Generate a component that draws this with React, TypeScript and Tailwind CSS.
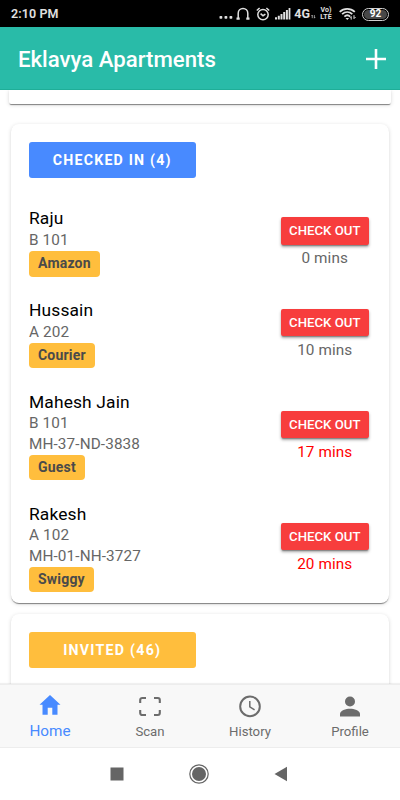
import type { ReactNode } from "react";

interface Visitor {
  name: string;
  unit: string;
  vehicle?: string;
  tag: string;
  minutes: number;
}

const OVERSTAY_MINUTES = 15;

const VISITORS: Visitor[] = [
  { name: "Raju", unit: "B 101", tag: "Amazon", minutes: 0 },
  { name: "Hussain", unit: "A 202", tag: "Courier", minutes: 10 },
  { name: "Mahesh Jain", unit: "B 101", vehicle: "MH-37-ND-3838", tag: "Guest", minutes: 17 },
  { name: "Rakesh", unit: "A 102", vehicle: "MH-01-NH-3727", tag: "Swiggy", minutes: 20 },
];

function StatusBar() {
  return (
    <div className="flex h-[27px] shrink-0 items-center justify-between bg-black pl-[11px] pr-[11px] pt-[1px] text-[#e0e0e0]">
      <span className="pt-[1px] text-[12.5px] font-semibold leading-none tracking-[0.1px]">2:10 PM</span>
      <div className="flex items-center">
        <svg width="14" height="14" viewBox="0 0 14 14" fill="currentColor">
          <rect x="0.5" y="9" width="2.8" height="2.8" rx="0.8" />
          <rect x="5.5" y="9" width="2.8" height="2.8" rx="0.8" />
          <rect x="10.5" y="9" width="2.8" height="2.8" rx="0.8" />
        </svg>
        <svg className="ml-[3px]" width="14" height="14" viewBox="0 0 14 14" fill="none" stroke="currentColor" strokeWidth="1.5">
          <path d="M2.2 12V6.2a4.8 4.8 0 0 1 9.6 0V12" />
          <path d="M0.5 11.6h3.2M10.3 11.6h3.2" strokeWidth="2.4" />
        </svg>
        <svg className="ml-[6px]" width="14" height="14" viewBox="0 0 14 14" fill="none" stroke="currentColor" strokeWidth="1.5">
          <circle cx="7" cy="7.6" r="5.2" />
          <path d="M0.8 3.5 3.6 1M13.2 3.5 10.4 1M4.6 6.6 7 8.7l2.4-1.6" />
        </svg>
        <svg className="ml-[5px]" width="16" height="14" viewBox="0 0 16 14" fill="currentColor">
          <path d="M0 10.2h2v2.3H0zM2.8 8.7h2v3.8h-2zM5.5 7h2v5.5h-2zM8.2 5h2v7.5h-2zM10.9 3h2v9.5h-2zM13.6 1h1.8v11.5h-1.8z" />
        </svg>
        <span className="ml-[3px] pt-[1px] text-[12.5px] font-bold leading-none">4G</span>
        <svg className="ml-[1px]" width="5" height="14" viewBox="0 0 6 14" fill="none" stroke="currentColor" strokeWidth="0.8">
          <path d="M1.5 12V8.3L0.6 9.4M4 8.3V12l1-1.2" />
        </svg>
        <span className="ml-[3px] flex w-[14px] flex-col items-center text-[7px] font-bold leading-[7px]">
          <span>Vo)</span>
          <span>LTE</span>
        </span>
        <svg className="ml-[6px]" width="18" height="14" viewBox="0 0 18 14" fill="none" stroke="currentColor" strokeWidth="1.8">
          <path d="M0.7 4.8C5 0.8 11.4 0.8 15.8 4.8M3.1 7.2c3-2.7 7.2-2.7 10.2 0M5.4 9.6c1.8-1.6 4-1.6 5.8 0" />
          <path d="M6.5 11h3.6l-1.8 2z" fill="currentColor" stroke="none" />
          <path d="M12.2 12.6v-3l-1 1.1M15 8.2v3.4l1.6-1.6" strokeWidth="1" />
        </svg>
        <span className="ml-[5px] flex h-[13px] w-[27px] items-center justify-center rounded-full border border-[#d0d0d0] p-[1px]">
          <span className="flex h-full w-full items-center justify-center rounded-full bg-[#484848] text-[10px] font-bold leading-none text-white">
            92
          </span>
        </span>
      </div>
    </div>
  );
}

function Card({ className, children }: { className: string; children?: ReactNode }) {
  return (
    <section className={`shrink-0 bg-white shadow-[0_2px_1px_-1px_rgba(0,0,0,0.35),0_1px_1px_rgba(0,0,0,0.14),0_1px_4px_rgba(0,0,0,0.14)] ${className}`}>
      {children}
    </section>
  );
}

function VisitorRow({ visitor }: { visitor: Visitor }) {
  const late = visitor.minutes > OVERSTAY_MINUTES;

  return (
    <li className={`flex justify-between pr-5 ${visitor.vehicle ? "h-[112px]" : "h-[91.7px]"}`}>
      <div className="flex flex-col items-start text-[15.3px] leading-[20.5px] text-[#666]">
        <h3 className="text-[17.4px] leading-[22.5px] tracking-[0.14px] text-black">{visitor.name}</h3>
        <p className="tracking-[0.12px]">{visitor.unit}</p>
        {visitor.vehicle && <p className="tracking-[0.12px]">{visitor.vehicle}</p>}
        <span className="mt-[0.7px] h-[25.5px] rounded-[4px] bg-[#ffbe3d] px-[9px] text-[14px] font-bold leading-[25px] tracking-[0.2px] text-[#4a4a4a]">
          {visitor.tag}
        </span>
      </div>
      <div className={`flex w-[88.5px] flex-col items-center ${visitor.vehicle ? "pt-[20px]" : "pt-[9.7px]"}`}>
        <button
          type="button"
          className="h-[27.5px] w-full shrink-0 rounded-[2px] bg-[#f73d3d] text-[13.2px] font-medium leading-[27.5px] text-white shadow-[0_2px_1px_-1px_rgba(0,0,0,0.25),0_2px_3px_rgba(0,0,0,0.35)]"
        >
          CHECK OUT
        </button>
        <p className={`mt-[3.5px] text-[15.3px] leading-[21px] tracking-[0.1px] ${late ? "text-[#ff0000]" : "text-[#666]"}`}>
          {visitor.minutes} mins
        </p>
      </div>
    </li>
  );
}

function Tab({ label, active, children }: { label: string; active?: boolean; children: ReactNode }) {
  return (
    <button type="button" className={`flex flex-1 flex-col items-center pt-2 ${active ? "text-[#488aff]" : "text-[#6c6c6c]"}`}>
      <svg width="26" height="26" viewBox="0 0 26 26" fill="currentColor">
        {children}
      </svg>
      <span className={`leading-5 ${active ? "mt-[2px] text-[15.3px]" : "mt-[3px] text-[13.2px]"}`}>{label}</span>
    </button>
  );
}

export default function App() {
  return (
    <div className="flex h-[800px] w-[400px] flex-col overflow-hidden bg-white font-[Roboto,sans-serif]">
      <StatusBar />
      <header className="flex h-[63px] shrink-0 items-center justify-between border-b border-[#1fae98] bg-[#29bba8] pl-[18px] pr-[14px] text-white">
        <h1 className="pt-[2px] text-[22.2px] font-medium leading-none">Eklavya Apartments</h1>
        <svg className="mt-[2px]" width="20" height="20" viewBox="0 0 20 20" fill="none" stroke="currentColor" strokeWidth="2.6">
          <path d="M10 0v20M0 10h20" />
        </svg>
      </header>

      <main className="flex min-h-0 flex-1 flex-col overflow-hidden">
        <Card className="mx-[9px] h-[14px] rounded-b-[2px]" />
        <Card className="mx-[11px] mt-5 h-[479px] rounded-[8px] pl-[18px] pt-[18px]">
          <h2 className="h-9 w-[166.5px] rounded-[3px] bg-[#488aff] text-center text-[14.2px] font-bold leading-9 tracking-[1.2px] text-white">
            CHECKED IN (4)
          </h2>
          <ul className="mt-[29.4px]">
            {VISITORS.map((visitor) => (
              <VisitorRow key={visitor.name} visitor={visitor} />
            ))}
          </ul>
        </Card>
        <Card className="mx-[11px] mt-[11px] h-[120px] rounded-[8px] pl-[18px] pt-[18px]">
          <h2 className="h-9 w-[166.5px] rounded-[3px] bg-[#ffbe3d] text-center text-[14.2px] font-bold leading-9 tracking-[1.25px] text-white">
            INVITED (46)
          </h2>
        </Card>
      </main>

      <nav className="z-10 flex h-[64px] shrink-0 border-y border-[#ededed] bg-[#f8f8f8] shadow-[0_-1px_1px_rgba(0,0,0,0.06)]">
        <Tab label="Home" active>
          <path d="M13 2 2.5 11.7h3V21.7h5.2v-7h4.6v7h5.2v-10h3z" />
        </Tab>
        <Tab label="Scan">
          <path
            d="M3.2 10V7a2 2 0 0 1 2-2H9M17 5h3.8a2 2 0 0 1 2 2v3M22.8 17v3a2 2 0 0 1-2 2H17M9 22H5.2a2 2 0 0 1-2-2v-3"
            fill="none"
            stroke="currentColor"
            strokeWidth="2.1"
          />
        </Tab>
        <Tab label="History">
          <g fill="none" stroke="currentColor">
            <circle cx="13" cy="13.4" r="9.8" strokeWidth="2" />
            <path d="M12.8 8.1v5.8l4.8 3" strokeWidth="1.5" />
          </g>
        </Tab>
        <Tab label="Profile">
          <circle cx="13" cy="8.5" r="5" />
          <path d="M3 23.5v-2.5c0-3.4 6-5.2 10-5.2s10 1.8 10 5.2v2.5z" />
        </Tab>
      </nav>

      <div className="flex h-[52px] shrink-0 items-center justify-center gap-[65px] pr-[1px] text-[#656565]">
        <svg className="-ml-px" width="14" height="14" viewBox="0 0 14 14">
          <rect x="0.5" y="0.5" width="13" height="13" fill="currentColor" />
        </svg>
        <svg width="20" height="20" viewBox="0 0 20 20">
          <circle cx="10" cy="10" r="9.2" fill="none" stroke="currentColor" strokeWidth="1.2" />
          <circle cx="10" cy="10" r="7" fill="currentColor" />
        </svg>
        <svg width="14" height="16" viewBox="0 0 14 16">
          <path d="M0.5 8 13 0.8v14.4z" fill="currentColor" />
        </svg>
      </div>
    </div>
  );
}
